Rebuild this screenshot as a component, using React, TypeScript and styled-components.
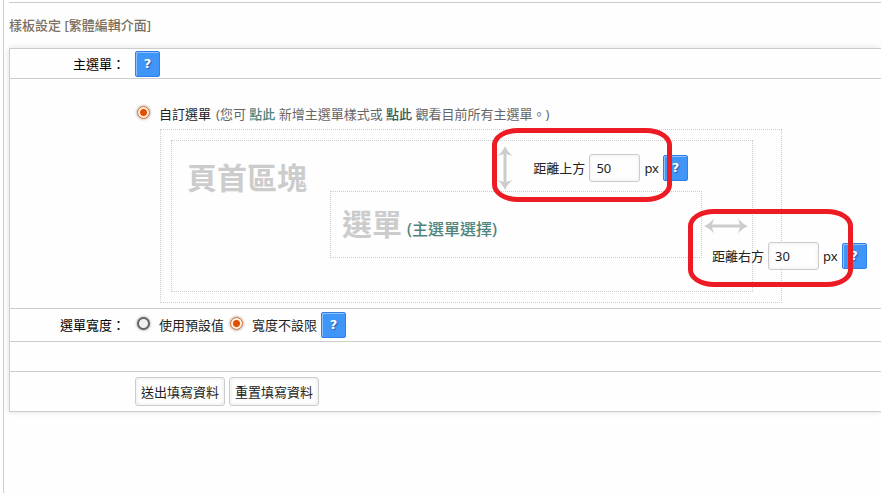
import React from "react";
import styled, { createGlobalStyle } from "styled-components";

const line = "#cccccc";
const teal = "#4f857c";
const darkTeal = "#345c55";

const GlobalStyle = createGlobalStyle`
  * { box-sizing: border-box; }
  body {
    margin: 0;
    background: #fefefe;
    color: #222;
    font: 13px/24px "Noto Sans", "Noto Sans CJK TC", sans-serif;
    overflow-x: hidden;
  }
  input, button { font: inherit; color: inherit; margin: 0; }
`;

const Page = styled.main`
  min-height: 100vh;
  margin-left: 3px;
  padding: 2px 0 0 5px;
  border-left: 1px solid ${line};
`;

const Title = styled.h1`
  margin: 0;
  padding: 10px 0 11px;
  border-top: 1px solid ${line};
  font-size: 13px;
  line-height: 24px;
  font-weight: 500;
  color: #7b7061;
`;

const Panel = styled.form`
  border: 1px solid ${line};
  border-right: 0;
  box-shadow: 0 0 6px rgba(0, 0, 0, 0.12);
`;

const Row = styled.div<{ $height: number }>`
  display: grid;
  grid-template-columns: 115px 1fr;
  column-gap: 10px;
  align-items: center;
  min-height: ${(p) => p.$height}px;
  & + & { border-top: 1px solid ${line}; }
`;

const RowLabel = styled.div`
  text-align: right;
  color: #000;
`;

const Cell = styled.div`
  display: flex;
  align-items: center;
  gap: 4px;
`;

const MenuCell = styled.div`
  padding: 22px 0 5px;
`;

const Option = styled.label`
  display: flex;
  align-items: center;
  gap: 9px;
  padding-left: 2px;
  white-space: nowrap;
`;

const Radio = styled.input`
  appearance: none;
  width: 13px;
  height: 13px;
  margin-bottom: 4px;
  border: 2px solid #666;
  border-radius: 50%;
  background: #f1f1f1;
  box-shadow: 0 0 3px rgba(0, 0, 0, 0.45);
  &:checked {
    border: 1px solid #d9662b;
    background: radial-gradient(circle, #e04e00 0 3px, #fdeee0 4px);
  }
`;

const Choice = styled.div`
  display: flex;
  align-items: center;
  white-space: nowrap;
  height: 26px;
  margin-bottom: 2px;
`;

const Hint = styled.span`
  margin-left: 5px;
  color: #666;
`;

const TextLink = styled.a<{ $dark?: boolean }>`
  color: ${(p) => (p.$dark ? darkTeal : teal)};
  font-weight: 500;
  text-decoration: none;
`;

const MenuLink = styled(TextLink)`
  font-size: 16px;
`;

const HelpButton = styled.button`
  width: 25px;
  height: 26px;
  padding: 0;
  flex: none;
  border: 1px solid #2f80ed;
  border-radius: 2px;
  background: #4095f8;
  box-shadow: inset 1px 1px 0 #8fc1fc;
  color: #fff;
  font: 700 13px/24px "DejaVu Sans", sans-serif;
  text-shadow: 1px 1px 1px #1d5fb8;
`;

const PlainButton = styled.button`
  height: 29px;
  padding: 0 5px;
  border: 1px solid ${line};
  border-radius: 3px;
  background: #fefefe;
  box-shadow: inset 0 0 4px rgba(0, 0, 0, 0.1);
`;

const Diagram = styled.div`
  position: relative;
  width: 622px;
  margin-left: 25px;
  padding: 10px 28px 10px 10px;
  border: 1px dotted ${line};
`;

const HeaderArea = styled.div`
  display: grid;
  grid-template-columns: 158px 1fr 50px;
  grid-template-rows: 50px 67px 33px;
  border: 1px dotted ${line};
`;

const AreaName = styled.strong`
  font-size: 30px;
  line-height: 44px;
  color: ${line};
`;

const HeaderName = styled(AreaName)`
  grid-area: 1 / 1 / 3 / 3;
  padding: 15px 0 0 15px;
`;

const MenuArea = styled.div`
  grid-area: 2 / 2;
  display: flex;
  align-items: baseline;
  gap: 5px;
  padding: 10px 11px;
  border: 1px dotted ${line};
`;

const Field = styled.div`
  display: flex;
  align-items: center;
  gap: 4px;
  white-space: nowrap;
`;

const TopGap = styled.div`
  grid-area: 1 / 2 / 2 / 4;
  justify-self: end;
  display: flex;
  align-items: center;
  gap: 20px;
  margin-right: 64px;
  padding-top: 4px;
`;

const RightGap = styled.div`
  grid-area: 2 / 3;
  display: flex;
  flex-direction: column;
  gap: 8px;
  padding: 27px 0 0 2px;
  ${Field} { padding-left: 8px; }
`;

const NumberBox = styled.input`
  width: 51px;
  height: 28px;
  flex: none;
  padding: 0 6px;
  border: 1px solid ${line};
  border-radius: 3px;
  background: #fefefe;
  box-shadow: inset 0 0 4px rgba(0, 0, 0, 0.08);
`;

const Arrow = styled.svg`
  display: block;
  flex: none;
  fill: ${line};
`;

const Ring = styled.div<{ $x: number; $y: number; $w: number; $h: number }>`
  position: absolute;
  left: ${(p) => p.$x}px;
  top: ${(p) => p.$y}px;
  width: ${(p) => p.$w}px;
  height: ${(p) => p.$h}px;
  border: 5px solid #ed1c24;
  border-radius: 26px / 17px;
  pointer-events: none;
`;

const Help = () => (
  <HelpButton type="button" aria-label="說明">?</HelpButton>
);

const GapField = ({ id, label, value }: { id: string; label: string; value: string }) => (
  <Field>
    <label htmlFor={id}>{label}</label>
    <NumberBox id={id} type="text" defaultValue={value} />
    <span>px</span>
    <Help />
  </Field>
);

export default function App() {
  return (
    <>
      <GlobalStyle />
      <Page>
        <Title>樣板設定 [繁體編輯介面]</Title>
        <Panel onSubmit={(e) => e.preventDefault()}>
          <Row $height={29}>
            <RowLabel>主選單：</RowLabel>
            <Cell><Help /></Cell>
          </Row>
          <Row $height={230}>
            <RowLabel />
            <MenuCell>
              <Choice>
                <Option>
                  <Radio type="radio" name="menu" defaultChecked />
                  自訂選單
                </Option>
                <Hint>
                  (您可 <TextLink href="#add">點此</TextLink> 新增主選單樣式或{" "}
                  <TextLink href="#list" $dark>點此</TextLink> 觀看目前所有主選單。)
                </Hint>
              </Choice>
              <Diagram>
                <HeaderArea>
                  <HeaderName>頁首區塊</HeaderName>
                  <TopGap>
                    <Arrow width="16" height="44" viewBox="0 0 16 44" aria-hidden="true">
                      <path d="M8 0Q11 7 16 10Q12 9 9.500 8V36Q12 35 16 34Q11 37 8 44Q5 37 0 34Q4 35 6.500 36V8Q4 9 0 10Q5 7 8 0Z" />
                    </Arrow>
                    <GapField id="gap-top" label="距離上方" value="50" />
                  </TopGap>
                  <MenuArea>
                    <AreaName>選單</AreaName>
                    <MenuLink href="#choose">(主選單選擇)</MenuLink>
                  </MenuArea>
                  <RightGap>
                    <Arrow width="44" height="16" viewBox="0 0 44 16" aria-hidden="true">
                      <path d="M0 8Q7 5 10 0Q9 4 8 6.500H36Q35 4 34 0Q37 5 44 8Q37 11 34 16Q35 12 36 9.500H8Q9 12 10 16Q7 11 0 8Z" />
                    </Arrow>
                    <GapField id="gap-right" label="距離右方" value="30" />
                  </RightGap>
                </HeaderArea>
                <Ring $x={331} $y={-2} $w={180} $h={74} />
                <Ring $x={527} $y={79} $w={165} $h={78} />
              </Diagram>
            </MenuCell>
          </Row>
          <Row $height={33}>
            <RowLabel>選單寬度：</RowLabel>
            <Cell>
              <Option><Radio type="radio" name="width" />使用預設值</Option>
              <Option><Radio type="radio" name="width" defaultChecked />寬度不設限</Option>
              <Help />
            </Cell>
          </Row>
          <Row $height={30} />
          <Row $height={40}>
            <RowLabel />
            <Cell>
              <PlainButton type="submit">送出填寫資料</PlainButton>
              <PlainButton type="reset">重置填寫資料</PlainButton>
            </Cell>
          </Row>
        </Panel>
      </Page>
    </>
  );
}
